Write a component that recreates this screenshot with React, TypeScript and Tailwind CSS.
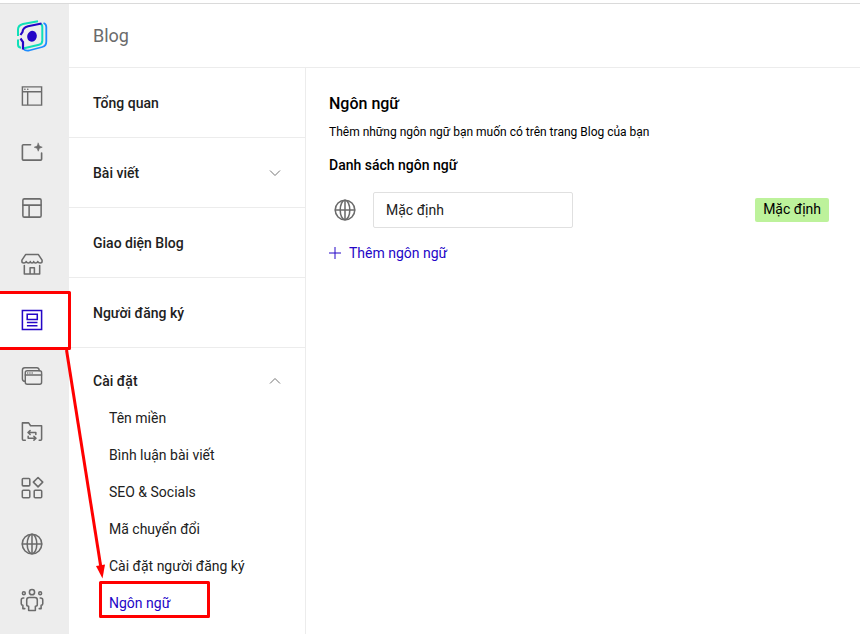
import type { ReactNode } from "react";

const font = "font-['Roboto','Liberation_Sans',sans-serif]";

function Icon({ children, width = 1.5 }: { children: ReactNode; width?: number }) {
  return (
    <svg viewBox="-0.5 -0.5 25 25" className="size-6 shrink-0" fill="none" stroke="currentColor" strokeWidth={width} strokeLinecap="round" strokeLinejoin="round" aria-hidden="true">
      {children}
    </svg>
  );
}

function Globe() {
  return (
    <Icon width={1.6}>
      <circle cx="12" cy="12" r="10.2" />
      <ellipse cx="12" cy="12" rx="5" ry="10.2" />
      <path d="M12 2v20M2 12h20" />
    </Icon>
  );
}

function Chevron({ open }: { open: boolean }) {
  return (
    <svg viewBox="0 0 12 12" className="size-3 text-[#757575]" fill="none" stroke="currentColor" strokeWidth="1" aria-hidden="true">
      <path d={open ? "M1 8.5l5-5 5 5" : "M1 3.5l5 5 5-5"} />
    </svg>
  );
}

const tools: { label: string; active?: boolean; icon: ReactNode }[] = [
  {
    label: "Trang",
    icon: (
      <Icon width={1.5}>
        <path d="M2 2.500h20v19h-20zM2 7.500h20M7.500 7.500v14" strokeLinejoin="miter" />
        <path d="M4.500 5h.2M7.500 5h.2" />
      </Icon>
    ),
  },
  {
    label: "Popup",
    icon: (
      <Icon width={1.7}>
        <path d="M10.500 4.500H3a1 1 0 0 0-1 1v14a1 1 0 0 0 1 1h18a1 1 0 0 0 1-1v-6.500" />
        <path d="M18.500 2.800l1.200 3 3 1.200-3 1.200-1.200 3-1.200-3-3-1.200 3-1.200z" fill="currentColor" strokeWidth=".6" />
      </Icon>
    ),
  },
  {
    label: "Bố cục",
    icon: (
      <Icon width={1.6}>
        <rect x="2.500" y="2.500" width="19" height="19" rx="1.500" />
        <path d="M2.500 9h19M9 9v12.500" />
      </Icon>
    ),
  },
  {
    label: "Cửa hàng",
    icon: (
      <Icon width={1.6}>
        <path d="M5.500 2h13L22.500 8v1.500q0 1.500-2 1.500t-2.500-1.500q-.5 1.500-2.250 1.500t-2-1.500q-.25 1.500-1.750 1.500t-1.750-1.500q-.25 1.500-2 1.500T6 9.500Q5.500 11 3.500 11t-2-1.500V8z" />
        <path d="M4 13.500v9h16v-9M10 22.500v-6.500h4.500v6.500" />
      </Icon>
    ),
  },
  {
    label: "Blog",
    active: true,
    icon: (
      <Icon width={1.6}>
        <path d="M2 2h20v20h-20zM7 6h10.500v5.500h-10.500zM6.700 14.600h11M6.700 18h11" strokeLinejoin="miter" strokeLinecap="butt" />
      </Icon>
    ),
  },
  {
    label: "Cửa sổ",
    icon: (
      <Icon width={1.5}>
        <rect x="5" y="6.500" width="17" height="14" rx="2" />
        <path d="M5 11h17M19.500 6.500q0-3-2.500-3H4.500Q2 3.500 2 6v9q0 2.500 3 2.500" />
        <path d="M7.500 8.800h.1M9.800 8.800h.1M12.100 8.800h.1" />
      </Icon>
    ),
  },
  {
    label: "Chuyển hướng",
    icon: (
      <Icon width={1.6}>
        <path d="M5 20.500H3a1 1 0 0 1-1-1v-17h6.500l2 3H22v14a1 1 0 0 1-1 1h-1.500" />
        <path d="M16 14.500v-2H8M10 10.500l-2.200 2 2.200 2M8 16.500v2h8M14 16.500l2.200 2-2.200 2" />
      </Icon>
    ),
  },
  {
    label: "Ứng dụng",
    icon: (
      <Icon width={1.6}>
        <rect x="1.900" y="2" width="7.800" height="7.800" rx="1" />
        <rect x="1.900" y="14.300" width="7.800" height="7.800" rx="1" />
        <rect x="14.300" y="14.300" width="7.800" height="7.800" rx="1" />
        <path d="M18.300 1l4.900 4.900-4.900 4.900-4.900-4.900z" />
      </Icon>
    ),
  },
  { label: "Tên miền", icon: <Globe /> },
  {
    label: "Thành viên",
    icon: (
      <Icon width={1.6}>
        <circle cx="12" cy="3.800" r="2.700" />
        <circle cx="3.500" cy="5" r="1.500" />
        <circle cx="20.500" cy="5" r="1.500" />
        <path d="M9 9.500h6q2.500 0 2.500 2.500v5q0 1.500-2 1.500v4.500h-7v-4.500q-2 0-2-1.500v-5q0-2.500 2.500-2.500z" />
        <path d="M3.500 10H3Q.8 10 .8 12v4q0 1.500 1.700 1.500V21h2M20.500 10h.5q2.200 0 2.200 2v4q0 1.500-1.700 1.500V21h-2" />
      </Icon>
    ),
  },
];

const settings = ["Tên miền", "Bình luận bài viết", "SEO & Socials", "Mã chuyển đổi", "Cài đặt người đăng ký", "Ngôn ngữ"];

const rowStyle = "flex h-[70px] w-full items-center justify-between border-b border-[#ececec] pl-6 pr-6 text-left text-sm font-medium";

function Logo() {
  return (
    <svg viewBox="0 0 32 34" className="h-[34px] w-8" fill="none" aria-hidden="true">
      <path d="M27.500 4Q30.300 5 30.300 8v14.500q0 4.500-4 5.500L13 31.500q-3.500.8-5.500-1.500" stroke="#1d8cff" strokeWidth="1.800" />
      <path d="M22 2.200L7 5Q2 6.200 2 10.500v6.500M2 20.500v5q0 3 3 3.200" stroke="#0fe0b8" strokeWidth="2" />
      <path d="M24.500 5q1.800.5 1.800 3v13.500q0 3.500-3.300 4.300L8 29.200" stroke="#0fe0b8" strokeWidth="2" />
      <path d="M25.500 4.500L12 7.200Q6.800 8.500 6.500 13l-2 3M4.500 19.500l2.500 3.500v7.500" stroke="#2406c7" strokeWidth="2.200" />
      <ellipse cx="16" cy="17.300" rx="4.800" ry="5.500" fill="#2406c7" transform="rotate(15 16 17.300)" />
    </svg>
  );
}

export default function App() {
  return (
    <div className={`relative mt-[3px] flex min-h-[calc(100vh-3px)] flex-col overflow-hidden border-t border-[#dadada] bg-white text-[#212121] ${font}`}>
      <div className="flex grow">
        <aside className="w-[69px] shrink-0 bg-[#ededed] text-[#6b6b6b]">
          <a href="#home" aria-label="Trang chủ" className="flex h-16 items-center pl-4">
            <Logo />
          </a>
          <nav>
            {tools.map((tool) => (
              <a
                key={tool.label}
                href="#tool"
                aria-label={tool.label}
                className={`flex h-14 items-center pl-5 ${tool.active ? "bg-white text-[#2406c7]" : ""}`}
              >
                {tool.icon}
              </a>
            ))}
          </nav>
        </aside>

        <div className="flex min-w-0 grow flex-col">
          <header className="flex h-16 items-center border-b border-[#ececec] px-6">
            <h1 className="text-lg text-[#6b6b6b]">Blog</h1>
          </header>

          <div className="flex grow">
            <nav className="w-[237px] shrink-0 border-r border-[#ececec]">
              <a href="#overview" className={rowStyle}>Tổng quan</a>
              <button type="button" className={rowStyle}>
                Bài viết
                <Chevron open={false} />
              </button>
              <a href="#theme" className={rowStyle}>Giao diện Blog</a>
              <a href="#subscribers" className={rowStyle}>Người đăng ký</a>
              <div className="pt-3.5">
                <button type="button" className="flex h-[37px] w-full items-center justify-between px-6 text-sm font-medium">
                  Cài đặt
                  <Chevron open />
                </button>
                <ul>
                  {settings.map((name) => (
                    <li key={name}>
                      <a href="#settings" className={`flex h-[37px] items-center pl-10 text-sm ${name === "Ngôn ngữ" ? "text-[#2406c7]" : ""}`}>
                        {name}
                      </a>
                    </li>
                  ))}
                </ul>
              </div>
            </nav>

            <main className="min-w-0 grow pl-[23px] pr-[31px] pt-6 text-black">
              <h2 className="text-base font-medium leading-6">Ngôn ngữ</h2>
              <p className="mt-2 text-xs leading-4">Thêm những ngôn ngữ bạn muốn có trên trang Blog của bạn</p>
              <h3 className="mt-[15px] text-sm font-medium leading-5">Danh sách ngôn ngữ</h3>
              <div className="mt-[17px] flex items-center">
                <span className="ml-1 text-[#6b6b6b]">
                  <Globe />
                </span>
                <input
                  type="text"
                  aria-label="Tên ngôn ngữ"
                  defaultValue="Mặc định"
                  className="ml-4 h-9 w-[200px] rounded-xs border border-[#e0e0e0] px-3 text-sm text-[#212121]"
                />
                <span className="ml-auto rounded-xs bg-[#bdf29b] px-2 pb-1 pt-0.5 text-sm leading-[18px]">Mặc định</span>
              </div>
              <button type="button" className="mt-[15px] flex items-center gap-2 text-sm leading-5 text-[#2406c7]">
                <svg viewBox="0 0 12 12" className="size-3" stroke="currentColor" strokeWidth="1" aria-hidden="true">
                  <path d="M6 0v12M0 6h12" />
                </svg>
                Thêm ngôn ngữ
              </button>
            </main>
          </div>
        </div>
      </div>

      <svg viewBox="0 0 220 634" className="pointer-events-none absolute left-0 -top-1 h-[634px] w-[220px]" fill="none" stroke="#ff0000" strokeWidth="3" strokeLinejoin="round" aria-hidden="true">
        <path d="M0 292.500h69.500v56H0" />
        <rect x="100.500" y="582.500" width="108" height="34" />
        <path d="M66.500 350l34.500 218" />
        <path d="M96 566l9-1.500-2.500 14z" fill="#ff0000" stroke="none" />
      </svg>
    </div>
  );
}
